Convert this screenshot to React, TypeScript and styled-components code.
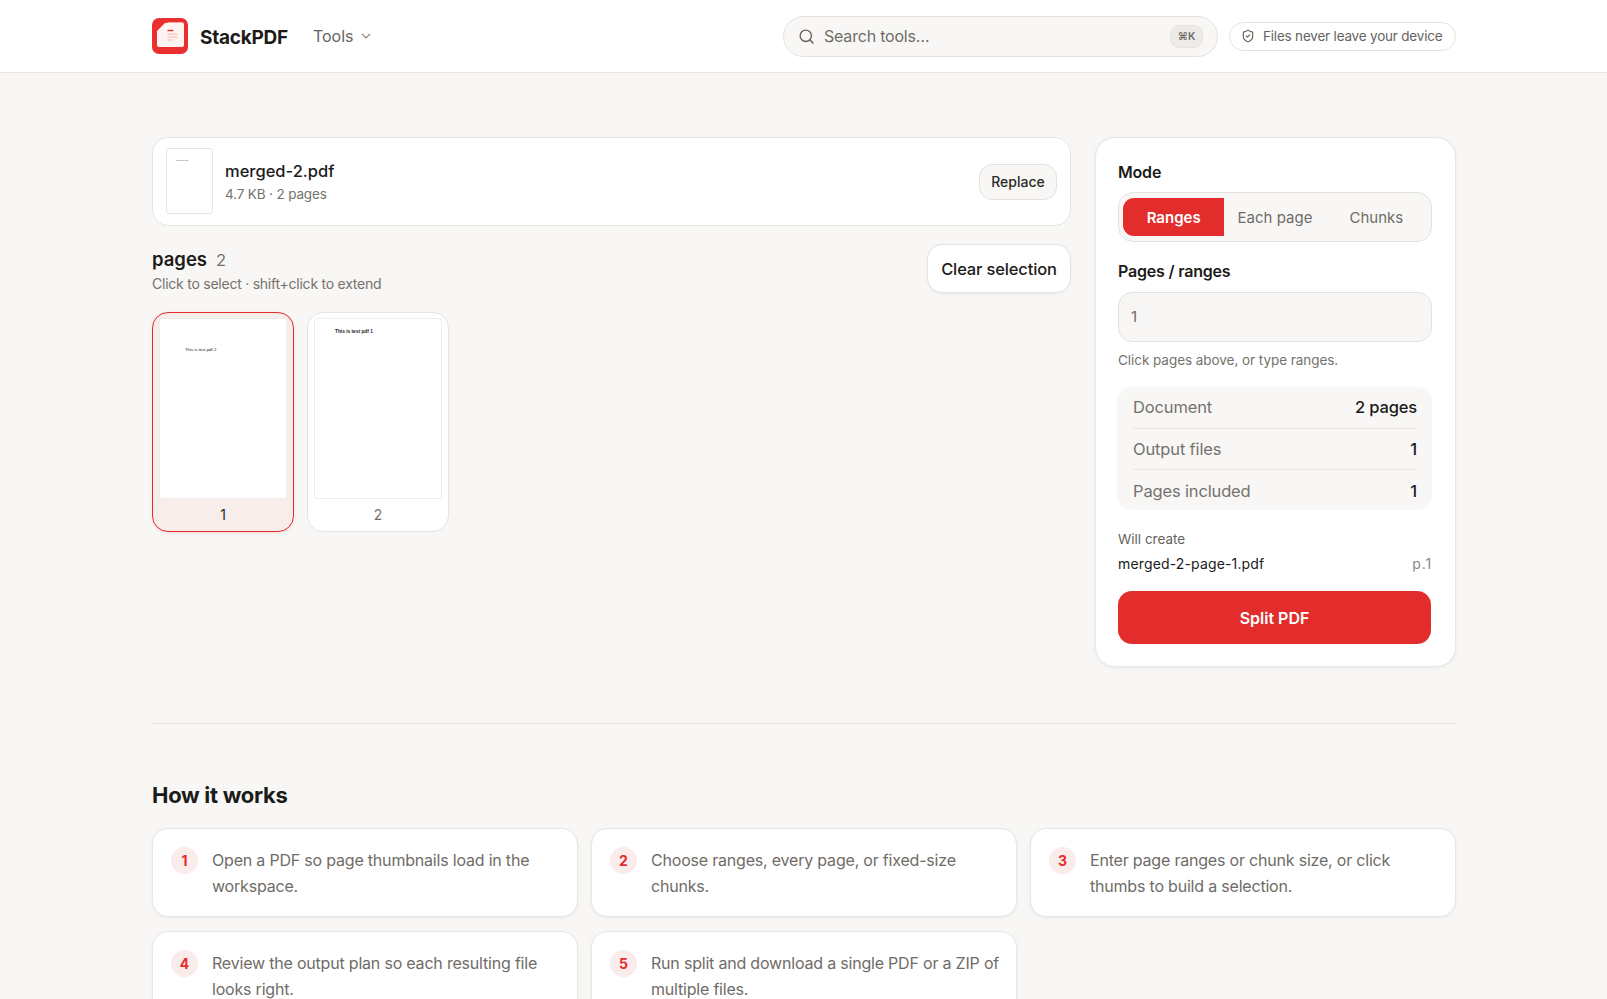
import React from 'react';
import styled, { createGlobalStyle } from 'styled-components';

const Global = createGlobalStyle`
  * { box-sizing: border-box; }
  html, body { margin: 0; height: 999px; overflow: hidden; background: #f8f7f5; }
  body { font-family: Inter, "Noto Sans", sans-serif; color: #1c1b1a; }
`;

const Header = styled.header`
  height: 73px;
  background: #ffffff;
  border-bottom: 1px solid #e9e7e4;
  padding: 0 151px 0 152px;
  display: flex;
  align-items: center;
`;

const LogoMark = styled.svg`
  width: 36px;
  height: 36px;
  flex-shrink: 0;
`;

const Brand = styled.span`
  font-size: 19px;
  font-weight: 700;
  letter-spacing: -0.25px;
  margin: 2px 0 0 12px;
`;

const ToolsMenu = styled.div`
  display: flex;
  align-items: center;
  gap: 6px;
  margin-left: 25px;
  font-size: 16px;
  color: #67645f;
`;

const Search = styled.div`
  width: 435px;
  height: 41px;
  margin-left: auto;
  display: flex;
  align-items: center;
  background: #f8f7f5;
  border: 1px solid #e4e2df;
  border-radius: 21px;
  padding: 0 14px;
  color: #6f6c67;
  font-size: 16px;
  letter-spacing: -0.2px;
`;

const SearchLabel = styled.span`
  margin-left: 9px;
  flex: 1;
`;

const Kbd = styled.span`
  width: 33px;
  height: 23px;
  border-radius: 9px;
  background: #ecebe8;
  border: 1px solid #e6e4e1;
  display: flex;
  align-items: center;
  justify-content: center;
  font-size: 10.5px;
  font-weight: 600;
  letter-spacing: 0;
  color: #6f6c67;
`;

const TrustPill = styled.div`
  height: 29px;
  width: 227px;
  margin-left: 11px;
  display: flex;
  align-items: center;
  gap: 8px;
  padding-left: 11px;
  background: #ffffff;
  border: 1px solid #e4e2df;
  border-radius: 15px;
  font-size: 13.5px;
  letter-spacing: -0.2px;
  color: #67645f;
`;

const Main = styled.main`
  padding: 64px 151px 0 152px;
`;

const Workspace = styled.div`
  display: grid;
  grid-template-columns: 919px 361.5px;
  column-gap: 23.5px;
  align-items: start;
`;

const LeftColumn = styled.div`
  display: flex;
  flex-direction: column;
`;

const FileCard = styled.div`
  height: 89px;
  background: #ffffff;
  border: 1px solid #e6e4e1;
  border-radius: 16px;
  padding: 0 13px;
  display: flex;
  align-items: center;
`;

const FileThumb = styled.div`
  width: 47px;
  height: 66px;
  margin-top: -1px;
  background: #ffffff;
  border: 1px solid #e6e4e1;
  border-radius: 3px;
  padding: 10px 0 0 9px;
  font-family: "Liberation Sans", sans-serif;
  font-size: 1.7px;
  line-height: 2px;
  color: #555;
`;

const FileInfo = styled.div`
  margin-left: 12px;
  flex: 1;
`;

const FileName = styled.div`
  font-size: 16.5px;
  font-weight: 500;
  line-height: 24px;
`;

const FileMeta = styled.div`
  font-size: 13.5px;
  letter-spacing: -0.15px;
  line-height: 20px;
  margin-top: 1px;
  color: #75726d;
`;

const ReplaceButton = styled.button`
  width: 78px;
  height: 36px;
  background: #f8f7f5;
  border: 1px solid #e4e2df;
  border-radius: 13px;
  font: 500 14px Inter, sans-serif;
  color: #2a2927;
  padding: 0;
`;

const PagesHead = styled.div`
  margin-top: 18px;
  height: 48px;
  display: flex;
  justify-content: space-between;
  align-items: flex-start;
`;

const PagesTitle = styled.div`
  font-size: 18.5px;
  font-weight: 600;
  line-height: 22px;
  margin-top: 4px;
`;

const PagesCount = styled.span`
  font-size: 16.5px;
  font-weight: 400;
  color: #75726d;
  margin-left: 9px;
`;

const PagesHint = styled.div`
  font-size: 14px;
  letter-spacing: -0.24px;
  line-height: 20px;
  color: #75726d;
  margin-top: 3px;
`;

const ClearButton = styled.button`
  width: 144px;
  height: 49px;
  background: #ffffff;
  border: 1px solid #e6e4e1;
  border-radius: 15px;
  box-shadow: 0 1px 3px rgba(30, 25, 20, 0.06);
  font: 500 16.5px Inter, sans-serif;
  letter-spacing: -0.15px;
  color: #1c1b1a;
  padding: 0;
`;

const ThumbGrid = styled.div`
  margin-top: 20px;
  display: flex;
  gap: 13px;
`;

const PageThumb = styled.div<{ $selected?: boolean }>`
  width: 142px;
  height: 220px;
  padding: 5px 6px 0;
  background: ${(p) => (p.$selected ? '#f7eeec' : '#ffffff')};
  border: 1px solid ${(p) => (p.$selected ? '#e32d2d' : '#e6e4e1')};
  border-radius: 16px;
  box-shadow: ${(p) => (p.$selected ? '0 1px 3px rgba(227, 45, 45, 0.15)' : 'none')};
`;

const PageSheet = styled.div<{ $x: number; $y: number; $size: number; $strong?: boolean }>`
  height: 181px;
  background: #ffffff;
  border: 1px solid #efedea;
  border-radius: 2px;
  padding: ${(p) => p.$y}px 0 0 ${(p) => p.$x}px;
  font-family: "Liberation Sans", sans-serif;
  font-size: ${(p) => p.$size}px;
  font-weight: ${(p) => (p.$strong ? 700 : 400)};
  line-height: 6px;
  color: #222;
`;

const PageNumber = styled.div<{ $selected?: boolean }>`
  text-align: center;
  font-size: 14px;
  line-height: 32px;
  color: ${(p) => (p.$selected ? '#2a2927' : '#75726d')};
`;

const SidePanel = styled.aside`
  height: 530px;
  background: #ffffff;
  border: 1px solid #e9e7e4;
  border-radius: 20px;
  box-shadow: 0 1px 4px rgba(30, 25, 20, 0.06);
  padding: 23px 23px 0 22.5px;
`;

const FieldLabel = styled.div<{ $top?: number }>`
  margin-top: ${(p) => p.$top ?? 0}px;
  font-size: 16px;
  font-weight: 600;
  letter-spacing: -0.2px;
  line-height: 22px;
`;

const Segments = styled.div`
  height: 50px;
  margin-top: 9px;
  padding: 5px 4px;
  display: grid;
  grid-template-columns: repeat(3, 1fr);
  background: #f8f7f5;
  border: 1px solid #e4e2df;
  border-radius: 15px;
`;

const Segment = styled.div<{ $active?: boolean }>`
  display: flex;
  align-items: center;
  justify-content: center;
  font-size: 15px;
  font-weight: ${(p) => (p.$active ? 600 : 400)};
  color: ${(p) => (p.$active ? '#ffffff' : '#6f6c67')};
  background: ${(p) => (p.$active ? '#e32d2d' : 'transparent')};
  border-radius: ${(p) => (p.$active ? '11px 0 0 11px' : '0')};
`;

const RangeInput = styled.div`
  height: 50px;
  margin-top: 10px;
  padding: 0 12px 2px;
  display: flex;
  align-items: center;
  background: #f7f6f4;
  border: 1px solid #e4e2df;
  border-radius: 14px;
  font-size: 15px;
  color: #6f6c67;
`;

const Hint = styled.div`
  margin-top: 8px;
  font-size: 13.5px;
  letter-spacing: -0.05px;
  line-height: 20px;
  color: #75726d;
`;

const Stats = styled.div`
  margin: 17px 0 0 -1px;
  height: 123px;
  padding: 0 15px 0 16px;
  background: #f8f7f5;
  border-radius: 15px;
`;

const StatRow = styled.div`
  height: 41px;
  display: flex;
  align-items: center;
  justify-content: space-between;
  font-size: 16.5px;
  letter-spacing: -0.15px;
  color: #75726d;
  &:first-child {
    padding-bottom: 2px;
  }
  &:last-child {
    padding-top: 2px;
  }
  & + & {
    border-top: 1px solid #e9e7e4;
  }
`;

const StatValue = styled.span`
  color: #1c1b1a;
  font-weight: 500;
`;

const WillCreate = styled.div`
  margin-top: 19px;
  font-size: 13.5px;
  line-height: 20px;
  color: #67645f;
`;

const OutputRow = styled.div`
  margin-top: 5px;
  display: flex;
  justify-content: space-between;
  font-size: 14px;
  letter-spacing: 0.15px;
  line-height: 20px;
`;

const OutputPages = styled.span`
  color: #8a8782;
  letter-spacing: 0.9px;
`;

const SplitButton = styled.button`
  display: block;
  width: 313px;
  height: 53px;
  margin: 17px 0 0;
  background: #e32d2d;
  border: 0;
  border-radius: 14px;
  color: #ffffff;
  font: 600 16px Inter, sans-serif;
  padding: 0;
`;

const Divider = styled.hr`
  margin: 56px 0 0;
  border: 0;
  border-top: 1px solid #e4e2df;
`;

const SectionTitle = styled.h2`
  margin: 56px 0 0;
  font-size: 22px;
  font-weight: 700;
  line-height: 30px;
  letter-spacing: -0.3px;
`;

const Steps = styled.div`
  margin-top: 18px;
  display: grid;
  grid-template-columns: repeat(3, 1fr);
  gap: 14px 13px;
`;

const StepCard = styled.div`
  height: 89px;
  padding: 18px 12px 0 18px;
  display: flex;
  gap: 14px;
  background: #ffffff;
  border: 1px solid #e9e7e4;
  border-radius: 16px;
  box-shadow: 0 1px 3px rgba(30, 25, 20, 0.06);
`;

const StepNumber = styled.span`
  width: 27px;
  height: 27px;
  flex-shrink: 0;
  border-radius: 50%;
  background: #faecea;
  color: #e32d2d;
  display: flex;
  align-items: center;
  justify-content: center;
  font-size: 14px;
  font-weight: 700;
`;

const StepText = styled.p`
  margin: 0;
  font-size: 16px;
  letter-spacing: -0.2px;
  line-height: 26px;
  color: #6f6c67;
`;

const steps = [
  'Open a PDF so page thumbnails load in the workspace.',
  'Choose ranges, every page, or fixed-size chunks.',
  'Enter page ranges or chunk size, or click thumbs to build a selection.',
  'Review the output plan so each resulting file looks right.',
  'Run split and download a single PDF or a ZIP of multiple files.',
];

const stats = [
  ['Document', '2 pages'],
  ['Output files', '1'],
  ['Pages included', '1'],
];

const App: React.FC = () => (
  <>
    <Global />
    <Header>
      <LogoMark viewBox="0 0 36 36">
        <rect width="36" height="36" rx="7" fill="#e92f2f" />
        <path d="M15 4h15a2 2 0 0 1 2 2v18z" fill="#f6a8a0" />
        <path d="M13 5h17a2 2 0 0 1 2 2v20a2 2 0 0 1-2 2H7a2 2 0 0 1-2-2V13z" fill="#fdf3f1" />
        <path d="M15.5 12.500h6" stroke="#e92f2f" strokeWidth="1.4" />
        <path d="M15.500 16h10M15.500 19h10M15.500 22h6" stroke="#f6b9b1" strokeWidth="1.100" />
      </LogoMark>
      <Brand>StackPDF</Brand>
      <ToolsMenu>
        Tools
        <svg width="12" height="12" viewBox="0 0 12 12" fill="none" stroke="#8a8782" strokeWidth="1.2">
          <path d="M2 4l4 4 4-4" />
        </svg>
      </ToolsMenu>
      <Search>
        <svg width="17" height="17" viewBox="0 0 24 24" fill="none" stroke="#67645f" strokeWidth="2" strokeLinecap="round">
          <circle cx="11" cy="11" r="8" />
          <path d="M21 21l-4.3-4.3" />
        </svg>
        <SearchLabel>Search tools…</SearchLabel>
        <Kbd>⌘K</Kbd>
      </Search>
      <TrustPill>
        <svg width="14" height="14" viewBox="0 0 24 24" fill="none" stroke="#67645f" strokeWidth="2" strokeLinecap="round" strokeLinejoin="round">
          <path d="M20 13c0 5-3.5 7.5-7.66 8.95a1 1 0 0 1-.67-.01C7.5 20.5 4 18 4 13V6a1 1 0 0 1 1-1c2 0 4.500-1.200 6.240-2.720a1.170 1.170 0 0 1 1.520 0C14.510 3.810 17 5 19 5a1 1 0 0 1 1 1z" />
          <path d="M9 12l2 2 4-4" />
        </svg>
        Files never leave your device
      </TrustPill>
    </Header>
    <Main>
      <Workspace>
        <LeftColumn>
          <FileCard>
            <FileThumb>This is test pdf 2</FileThumb>
            <FileInfo>
              <FileName>merged-2.pdf</FileName>
              <FileMeta>4.7 KB · 2 pages</FileMeta>
            </FileInfo>
            <ReplaceButton>Replace</ReplaceButton>
          </FileCard>
          <PagesHead>
            <div>
              <PagesTitle>
                pages<PagesCount>2</PagesCount>
              </PagesTitle>
              <PagesHint>Click to select · shift+click to extend</PagesHint>
            </div>
            <ClearButton>Clear selection</ClearButton>
          </PagesHead>
          <ThumbGrid>
            <PageThumb $selected>
              <PageSheet $x={25} $y={28} $size={4.3}>This is test pdf 2</PageSheet>
              <PageNumber $selected>1</PageNumber>
            </PageThumb>
            <PageThumb>
              <PageSheet $x={20} $y={10} $size={4.8} $strong>This is test pdf 1</PageSheet>
              <PageNumber>2</PageNumber>
            </PageThumb>
          </ThumbGrid>
        </LeftColumn>
        <SidePanel>
          <FieldLabel>Mode</FieldLabel>
          <Segments>
            <Segment $active>Ranges</Segment>
            <Segment>Each page</Segment>
            <Segment>Chunks</Segment>
          </Segments>
          <FieldLabel $top={18}>Pages / ranges</FieldLabel>
          <RangeInput>1</RangeInput>
          <Hint>Click pages above, or type ranges.</Hint>
          <Stats>
            {stats.map(([label, value]) => (
              <StatRow key={label}>
                {label}
                <StatValue>{value}</StatValue>
              </StatRow>
            ))}
          </Stats>
          <WillCreate>Will create</WillCreate>
          <OutputRow>
            merged-2-page-1.pdf
            <OutputPages>p.1</OutputPages>
          </OutputRow>
          <SplitButton>Split PDF</SplitButton>
        </SidePanel>
      </Workspace>
      <Divider />
      <SectionTitle>How it works</SectionTitle>
      <Steps>
        {steps.map((text, i) => (
          <StepCard key={text}>
            <StepNumber>{i + 1}</StepNumber>
            <StepText>{text}</StepText>
          </StepCard>
        ))}
      </Steps>
    </Main>
  </>
);

export default App;
